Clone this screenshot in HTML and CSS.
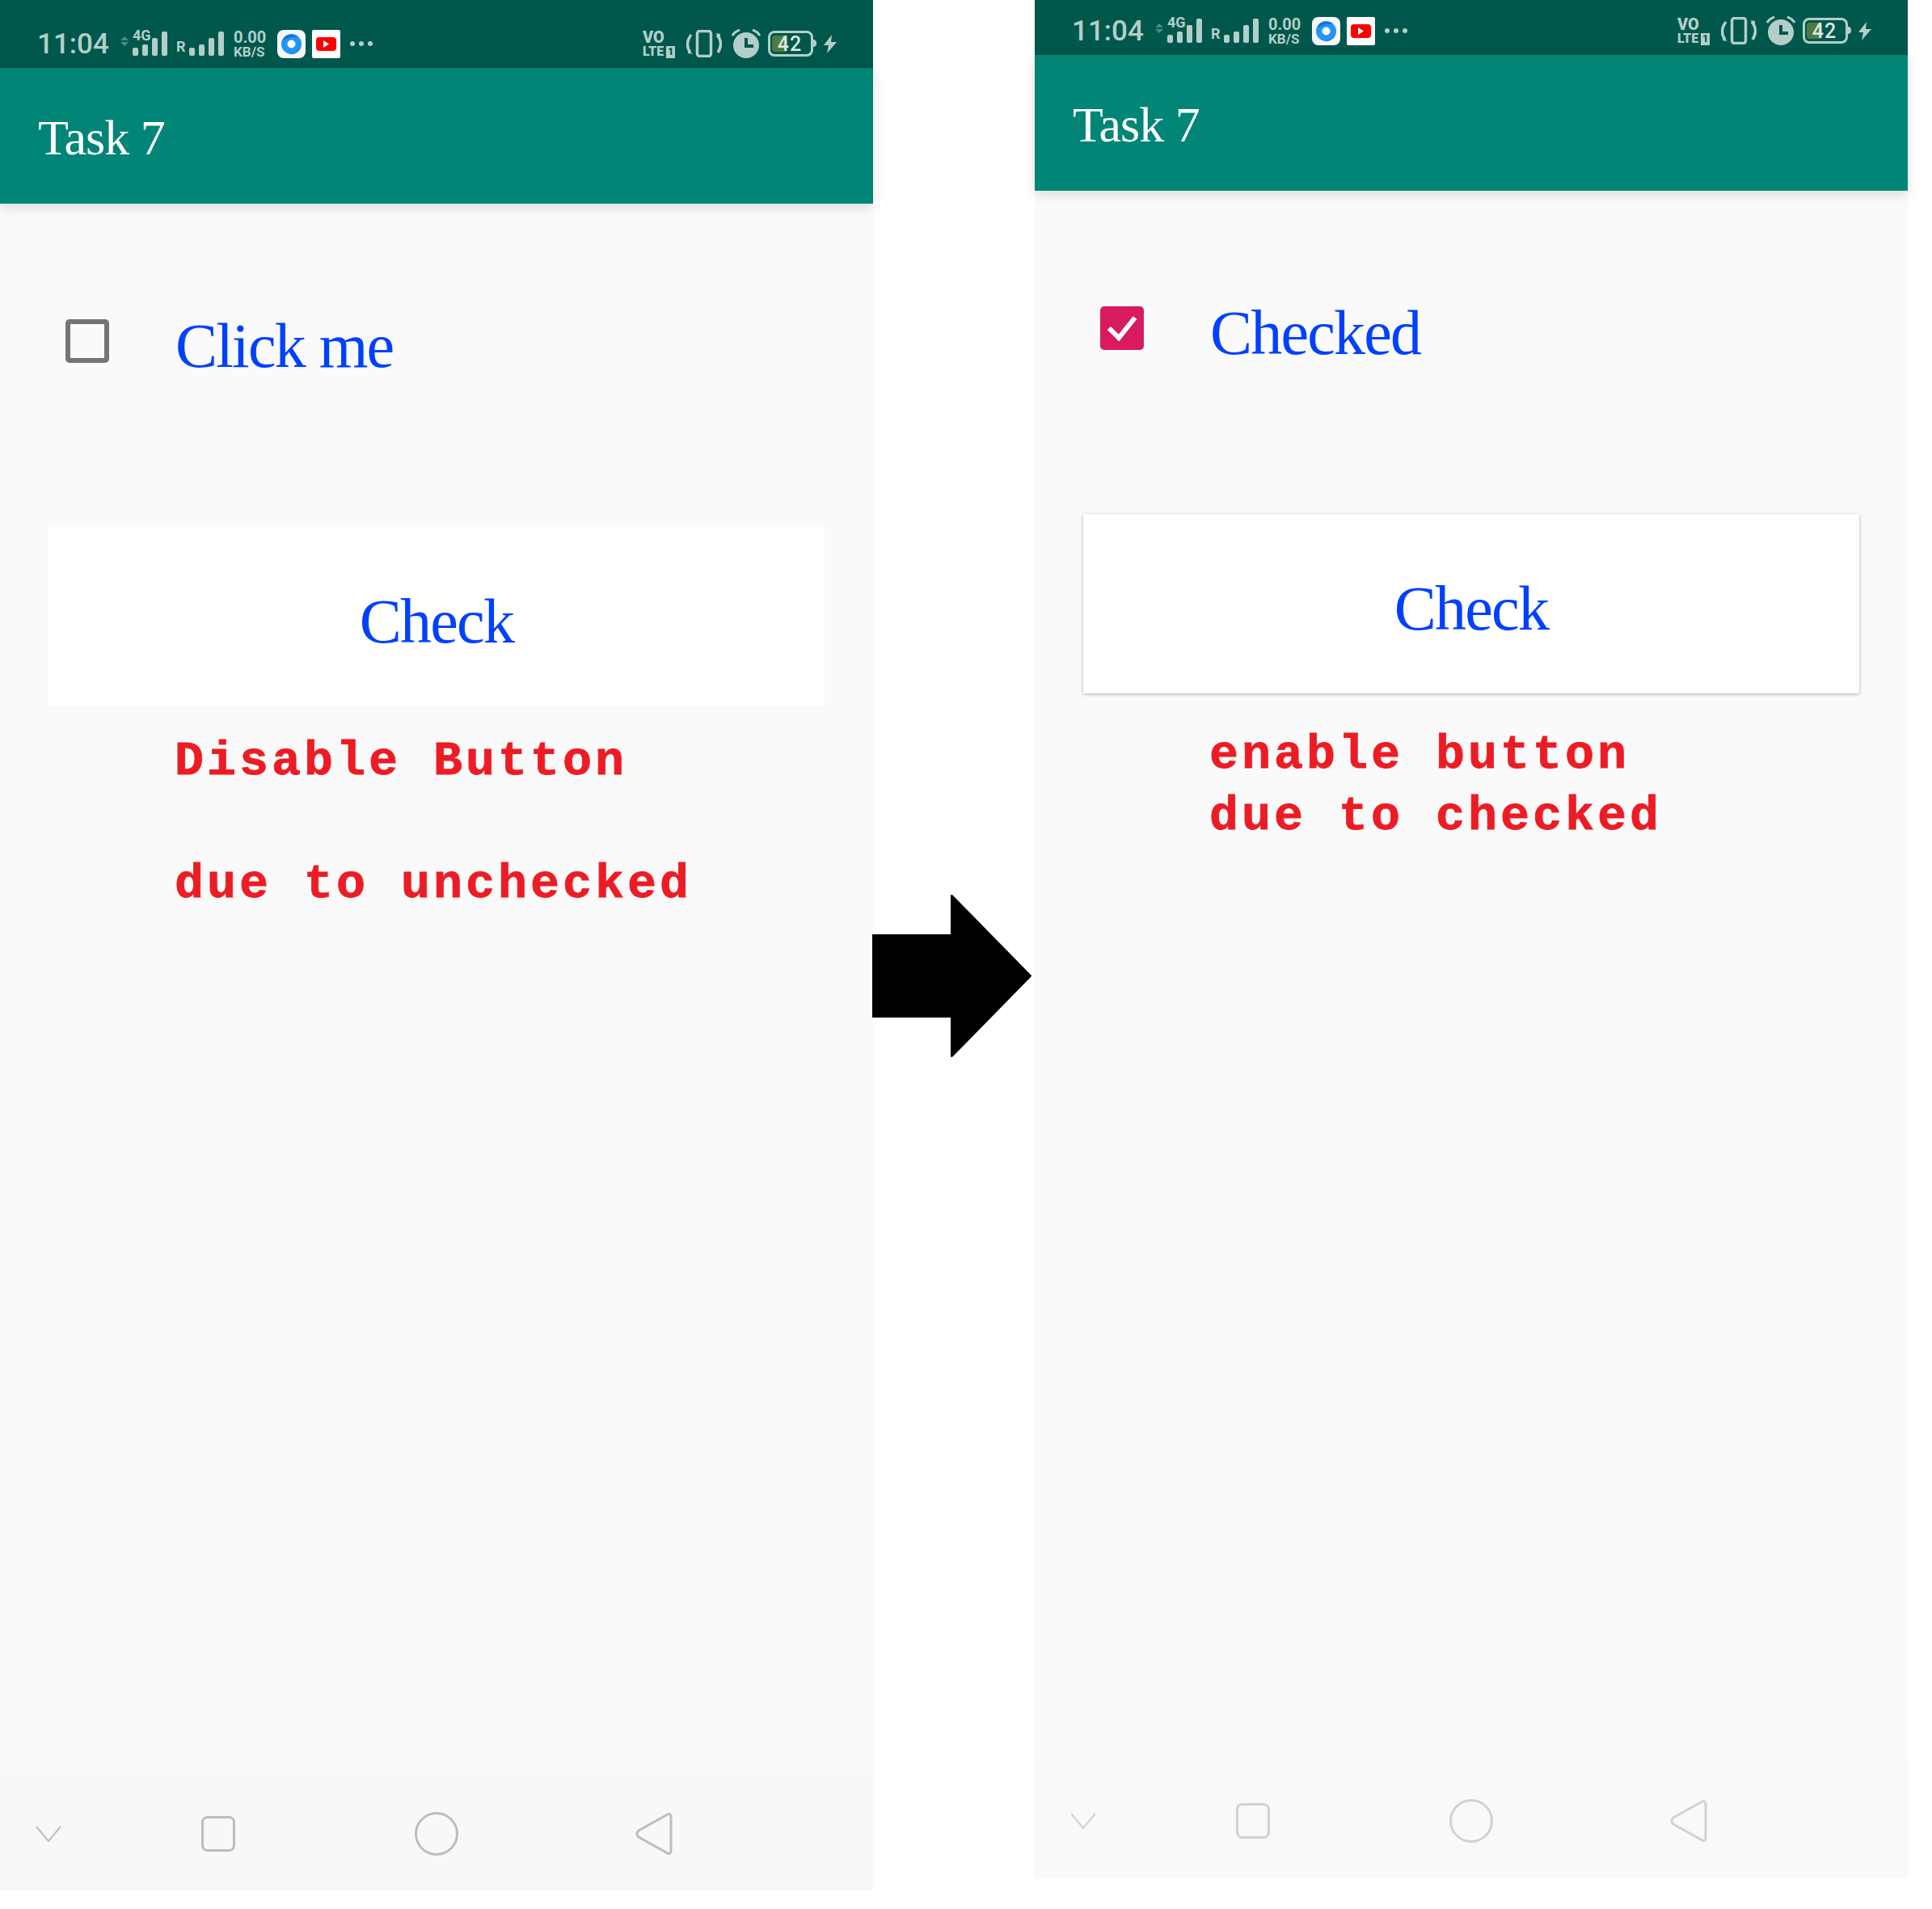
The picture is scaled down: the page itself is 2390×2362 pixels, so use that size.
FILE: index.html
```html
<!DOCTYPE html>
<html>
    <head>
        <meta charset="UTF-8" />
        <title>Task 7</title>
        <link rel="stylesheet" href="styles.css">
    </head>
    <body>
        <svg class="defs" width="0" height="0">
            <symbol id="updown" viewBox="0 0 10 12">
                <path d="M5 0 L10 5 H0 Z M5 12 L10 7 H0 Z" />
            </symbol>
            <symbol id="bars" viewBox="0 0 43 30">
                <rect x="0" y="20" width="7" height="10" rx="2" />
                <rect x="12" y="16" width="7" height="14" rx="2" />
                <rect x="24" y="8" width="7" height="22" rx="2" />
                <rect x="36" y="0" width="7" height="30" rx="2" />
            </symbol>
            <symbol id="browser" viewBox="0 0 35 35">
                <rect width="35" height="35" rx="8" fill="#f6f6fb" />
                <circle cx="17.500" cy="17.500" r="12.500" fill="#2196f3" />
                <path d="M6 14 A12.500 12.500 0 0 1 26 9 C20 8 12 9 6 14 Z M29 20 A12.500 12.500 0 0 1 15 30 C21 29 27 26 29 20 Z" fill="#1a6fd0" />
                <circle cx="17.500" cy="17.500" r="5" fill="#fff" />
            </symbol>
            <symbol id="youtube" viewBox="0 0 35 35">
                <rect width="35" height="35" rx="2" fill="#fff" />
                <rect x="5" y="9" width="25" height="17" rx="4" fill="#f00" />
                <path d="M14 13 L21 17.500 L14 22 Z" fill="#fff" />
            </symbol>
            <symbol id="vibrate" viewBox="0 0 44 34">
                <rect x="13.500" y="1.500" width="17" height="31" rx="3" fill="none" stroke="currentColor" stroke-width="3.500" />
                <path d="M6 6 C0 14 0 21 5 28" fill="none" stroke="currentColor" stroke-width="3.500" />
                <path d="M38 6 C44 13 44 20 39 28" fill="none" stroke="currentColor" stroke-width="3.500" />
                <path d="M2 25 L8 30 L2 29 Z M42 9 L36 4 L42 5 Z" />
            </symbol>
            <symbol id="alarm" viewBox="0 0 36 36">
                <circle cx="18" cy="20" r="16" />
                <path d="M16 11 H20 V19 H27 V23 H16 Z" fill="#00574b" />
                <path d="M1 8 Q4 3 10 1" fill="none" stroke="currentColor" stroke-width="3" />
                <path d="M35 8 Q32 3 26 1" fill="none" stroke="currentColor" stroke-width="3" />
            </symbol>
            <symbol id="bolt" viewBox="0 0 16 23">
                <path d="M10 0 L0 13 H6 L4 23 L16 9 H9 Z" />
            </symbol>
            <symbol id="chevron" viewBox="0 0 32 20">
                <path d="M1 1 L16 19 L31 1" fill="none" stroke="currentColor" stroke-width="2" />
            </symbol>
            <symbol id="square" viewBox="0 0 42 44">
                <rect x="1.500" y="1.500" width="39" height="41" rx="6" fill="none" stroke="currentColor" stroke-width="3" />
            </symbol>
            <symbol id="circle" viewBox="0 0 54 54">
                <circle cx="27" cy="27" r="25.500" fill="none" stroke="currentColor" stroke-width="3" />
            </symbol>
            <symbol id="back" viewBox="0 0 46 52">
                <path d="M38 3 Q44 -1 44 6 V46 Q44 53 38 49 L4 30 Q0 26 4 22 Z" fill="none" stroke="currentColor" stroke-width="3" />
            </symbol>
        </svg>

        <div class="page">
            <div class="phone">
                <div class="statusbar">
                    <span class="time">11:04</span>
                    <svg class="updown"><use href="#updown" /></svg>
                    <div class="signal">
                        <span class="net">4G</span>
                        <svg class="bars"><use href="#bars" /></svg>
                    </div>
                    <span class="roam">R</span>
                    <svg class="bars"><use href="#bars" /></svg>
                    <div class="speed"><span>0.00</span><span>KB/S</span></div>
                    <svg class="app-icon first"><use href="#browser" /></svg>
                    <svg class="app-icon"><use href="#youtube" /></svg>
                    <div class="dots"><i></i><i></i><i></i></div>
                    <div class="status-right">
                        <div class="volte"><span>VO</span><span class="lte">LTE<b>1</b></span></div>
                        <svg class="vibrate"><use href="#vibrate" /></svg>
                        <svg class="alarm"><use href="#alarm" /></svg>
                        <div class="battery"><i></i><span>42</span></div>
                        <svg class="bolt"><use href="#bolt" /></svg>
                    </div>
                </div>
                <div class="appbar">Task 7</div>
                <div class="content">
                    <div class="check-row">
                        <span class="checkbox"></span>
                        <span class="check-label">Click me</span>
                    </div>
                    <div class="button disabled">Check</div>
                    <p class="message spaced">Disable Button<br><br>due to unchecked</p>
                </div>
                <div class="navbar">
                    <svg class="nav-chevron"><use href="#chevron" /></svg>
                    <svg class="nav-square"><use href="#square" /></svg>
                    <svg class="nav-circle"><use href="#circle" /></svg>
                    <svg class="nav-back"><use href="#back" /></svg>
                </div>
            </div>

            <div class="phone second">
                <div class="statusbar">
                    <span class="time">11:04</span>
                    <svg class="updown"><use href="#updown" /></svg>
                    <div class="signal">
                        <span class="net">4G</span>
                        <svg class="bars"><use href="#bars" /></svg>
                    </div>
                    <span class="roam">R</span>
                    <svg class="bars"><use href="#bars" /></svg>
                    <div class="speed"><span>0.00</span><span>KB/S</span></div>
                    <svg class="app-icon first"><use href="#browser" /></svg>
                    <svg class="app-icon"><use href="#youtube" /></svg>
                    <div class="dots"><i></i><i></i><i></i></div>
                    <div class="status-right">
                        <div class="volte"><span>VO</span><span class="lte">LTE<b>1</b></span></div>
                        <svg class="vibrate"><use href="#vibrate" /></svg>
                        <svg class="alarm"><use href="#alarm" /></svg>
                        <div class="battery"><i></i><span>42</span></div>
                        <svg class="bolt"><use href="#bolt" /></svg>
                    </div>
                </div>
                <div class="appbar">Task 7</div>
                <div class="content">
                    <div class="check-row">
                        <span class="checkbox checked">
                            <svg viewBox="0 0 54 54"><path d="M11 27 L23 39 L43 14" fill="none" stroke="#fff" stroke-width="6" /></svg>
                        </span>
                        <span class="check-label">Checked</span>
                    </div>
                    <div class="button">Check</div>
                    <p class="message">enable button<br>due to checked</p>
                </div>
                <div class="navbar">
                    <svg class="nav-chevron"><use href="#chevron" /></svg>
                    <svg class="nav-square"><use href="#square" /></svg>
                    <svg class="nav-circle"><use href="#circle" /></svg>
                    <svg class="nav-back"><use href="#back" /></svg>
                </div>
            </div>

            <svg class="arrow" viewBox="0 0 197 201">
                <path d="M0 49 H97 V1 Q98 -1 100 1 L196 99 Q198 100 196 102 L100 200 Q98 202 97 200 V152 H0 Z" />
            </svg>
        </div>
    </body>
</html>
```

FILE: styles.css
```css
* {
  margin: 0;
  padding: 0;
  box-sizing: border-box;
}

html, body {
  width: 100%;
  height: 100%;
  background: #fff;
  overflow: hidden;
}

.defs {
  position: absolute;
}

.page {
  position: relative;
  display: flex;
  gap: 200px;
  width: 2390px;
  height: 2362px;
  overflow: hidden;
}

.phone {
  display: flex;
  flex-direction: column;
  width: 1080px;
  height: 2340px;
  background: #fafafa;
  color: #0040ff;
  font-family: "Liberation Serif", serif;
}

.phone.second {
  margin-top: -16px;
}

/* status bar */

.statusbar {
  display: flex;
  align-items: center;
  height: 84px;
  padding: 36px 45px 12px 46px;
  background: #00574b;
  color: #b3cec9;
  fill: #b3cec9;
  font-family: Roboto, sans-serif;
  font-weight: 500;
}

.time {
  width: 89px;
  padding-top: 2px;
  font-size: 35px;
  line-height: 40px;
  white-space: nowrap;
}

.updown {
  width: 10px;
  height: 12px;
  margin: -6px 0 0 14px;
  fill: #4b8f83;
}

.signal {
  position: relative;
  width: 43px;
  height: 30px;
  margin-left: 5px;
}

.net {
  position: absolute;
  left: 0;
  top: -4px;
  font-size: 18px;
  line-height: 18px;
  font-weight: 700;
}

.bars {
  display: block;
  width: 43px;
  height: 30px;
}

.signal .bars {
  display: block;
}

.roam {
  width: 16px;
  margin: 8px 0 0 11px;
  font-size: 18px;
  line-height: 18px;
  font-weight: 700;
}

.speed {
  display: flex;
  flex-direction: column;
  width: 42px;
  margin-left: 12px;
  font-size: 17px;
  line-height: 16px;
  font-weight: 700;
}

.speed span:first-child {
  font-size: 20px;
  line-height: 20px;
}

.app-icon {
  width: 35px;
  height: 35px;
  margin-left: 8px;
}

.app-icon.first {
  margin-left: 12px;
}

.dots {
  display: flex;
  gap: 5px;
  margin-left: 12px;
}

.dots i {
  width: 6px;
  height: 6px;
  border-radius: 50%;
  background: #b3cec9;
}

.status-right {
  display: flex;
  align-items: center;
  margin-left: auto;
}

.volte {
  display: flex;
  flex-direction: column;
  width: 42px;
  font-weight: 900;
  font-size: 20px;
  line-height: 20px;
}

.lte {
  display: flex;
  align-items: flex-end;
  gap: 3px;
  font-size: 16px;
  line-height: 16px;
}

.lte b {
  width: 11px;
  height: 15px;
  background: #b3cec9;
  color: #00574b;
  font-size: 12px;
  line-height: 15px;
  text-align: center;
}

.vibrate {
  width: 44px;
  height: 34px;
  margin-left: 12px;
  color: #b3cec9;
}

.alarm {
  width: 36px;
  height: 36px;
  margin-left: 12px;
  color: #b3cec9;
}

.battery {
  position: relative;
  display: flex;
  align-items: center;
  justify-content: center;
  width: 56px;
  height: 32px;
  margin-left: 9px;
  padding-right: 2px;
  border: 3px solid #b3cec9;
  border-radius: 8px;
  color: #dbe8e0;
  font-size: 25px;
}

.battery i {
  position: absolute;
  left: 2px;
  top: 3px;
  width: 19px;
  height: 20px;
  border-radius: 4px;
  background: #4d7a45;
}

.battery span {
  position: relative;
  letter-spacing: 1px;
}

.battery::after {
  content: "";
  position: absolute;
  right: -7px;
  top: 8px;
  width: 4px;
  height: 9px;
  border-radius: 0 4px 4px 0;
  background: #b3cec9;
}

.bolt {
  width: 16px;
  height: 23px;
  margin-left: 13px;
}

/* app bar */

.appbar {
  height: 168px;
  padding: 0 0 0 47px;
  background: #008577;
  color: #fff;
  font-size: 62px;
  line-height: 172px;
  letter-spacing: -1px;
  box-shadow: 0 5px 14px rgba(0, 0, 0, 0.12);
}

/* page content */

.content {
  flex: 1;
}

.check-row {
  display: flex;
  align-items: center;
  gap: 82px;
  height: 140px;
  margin-top: 100px;
  padding-left: 81px;
}

.checkbox {
  width: 54px;
  height: 54px;
  border: 6px solid #757575;
  border-radius: 5px;
}

.checkbox.checked {
  border: 0;
  background: #d81b60;
}

.checkbox svg {
  display: block;
}

.check-label {
  padding-top: 11px;
  font-size: 78px;
  letter-spacing: -1.8px;
}

.button {
  display: flex;
  align-items: center;
  justify-content: center;
  height: 222px;
  margin: 160px 60px 0;
  padding-top: 11px;
  background: #fff;
  font-size: 78px;
  letter-spacing: -1.8px;
  box-shadow: 0 1px 4px rgba(0, 0, 0, 0.3);
}

.button.disabled {
  box-shadow: none;
}

.message {
  margin: 38px 0 0 216px;
  color: #ed1c24;
  font-family: "Liberation Mono", monospace;
  font-weight: 700;
  font-size: 60px;
  line-height: 76px;
  letter-spacing: 4px;
  -webkit-text-stroke: 0.8px #ed1c24;
}

.message.spaced {
  margin-top: 30px;
}

/* nav bar */

.navbar {
  display: flex;
  align-items: center;
  height: 145px;
  padding: 2px 0 0 44px;
  background: #f8f8f8;
  color: #bdbdbd;
}

.second .navbar {
  background: #f9f9f9;
  color: #d2d2d2;
}

.nav-chevron {
  width: 32px;
  height: 20px;
}

.nav-square {
  width: 42px;
  height: 44px;
  margin-left: 173px;
}

.nav-circle {
  width: 54px;
  height: 54px;
  margin-left: 222px;
}

.nav-back {
  width: 46px;
  height: 52px;
  margin-left: 219px;
}

.arrow {
  position: absolute;
  left: 1079px;
  top: 1107px;
  width: 197px;
  height: 201px;
}
```
